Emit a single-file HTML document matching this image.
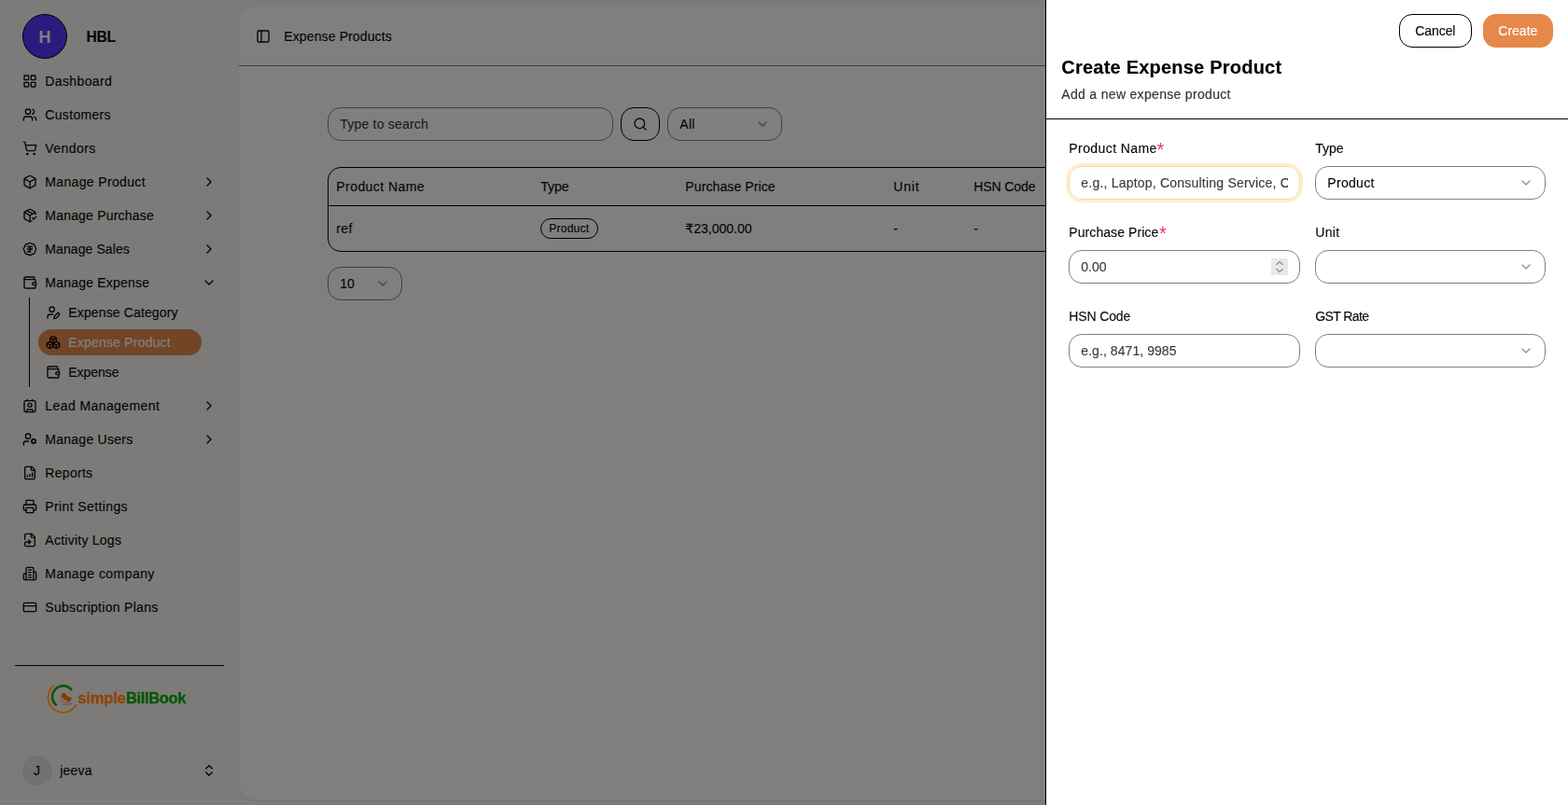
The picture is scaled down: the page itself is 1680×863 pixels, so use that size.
<!DOCTYPE html>
<html lang="en">
<head>
<meta charset="utf-8">
<title>Expense Products</title>
<style>

*{box-sizing:border-box;margin:0;padding:0}
html,body{width:1680px;height:863px;overflow:hidden;background:#fff}
body{font-family:"Liberation Sans", "DejaVu Sans", sans-serif;font-size:14px;color:#0a0a0a;position:relative}
.abs,.t,.ic,.bx{position:absolute}
.t{white-space:nowrap;line-height:20px;display:block;-webkit-text-stroke:0.15px currentColor}
.ic{display:block;overflow:visible}
#sidebar{position:absolute;left:0;top:0;width:1680px;height:863px;background:#f8f6f3}
#inset{position:absolute;left:256px;top:7px;width:1500px;height:851px;background:#fff;border-radius:19px;box-shadow:0 1px 2px rgba(0,0,0,.06)}
#overlay{position:absolute;left:0;top:0;width:1680px;height:863px;background:rgba(0,0,0,.5)}
#sheet{position:absolute;left:1120px;top:0;width:560px;height:863px;background:#fff;border-left:1px solid #000}
.bx{border:1px solid #808080;border-radius:14px;background:transparent}

</style>
</head>
<body>
<div id="sidebar">
<div class="bx" style="left:24px;top:15px;width:48px;height:48px;border-radius:50%;background:#5438ff;border:1px solid #000"></div>
<span class="t" id="av" style="left:41.40px;top:30.06px;line-height:20px;font-size:18px;font-weight:700;color:#fff;letter-spacing:0.000px;-webkit-text-stroke:0;">H</span>
<span class="t" id="org" style="left:92.60px;top:29.89px;line-height:20px;font-size:15.6px;font-weight:700;color:#0a0a0a;letter-spacing:-0.300px;-webkit-text-stroke:0.1px currentColor;">HBL</span>
<svg class="ic" style="left:24px;top:79px;width:16px;height:16px;color:currentColor;" viewBox="0 0 24 24" fill="none" stroke="currentColor" stroke-width="2" stroke-linecap="round" stroke-linejoin="round"><rect width="7" height="7" x="3" y="3" rx="1"/><rect width="7" height="7" x="14" y="3" rx="1"/><rect width="7" height="7" x="14" y="14" rx="1"/><rect width="7" height="7" x="3" y="14" rx="1"/></svg>
<span class="t" id="m0" style="left:48.30px;top:77.15px;line-height:20px;font-size:14px;font-weight:400;color:#0a0a0a;letter-spacing:0.376px;">Dashboard</span>
<svg class="ic" style="left:24px;top:115px;width:16px;height:16px;color:currentColor;" viewBox="0 0 24 24" fill="none" stroke="currentColor" stroke-width="2" stroke-linecap="round" stroke-linejoin="round"><path d="M16 21v-2a4 4 0 0 0-4-4H6a4 4 0 0 0-4 4v2"/><path d="M16 3.128a4 4 0 0 1 0 7.744"/><path d="M22 21v-2a4 4 0 0 0-3-3.87"/><circle cx="9" cy="7" r="4"/></svg>
<span class="t" id="m1" style="left:48.30px;top:113.15px;line-height:20px;font-size:14px;font-weight:400;color:#0a0a0a;letter-spacing:0.325px;">Customers</span>
<svg class="ic" style="left:24px;top:151px;width:16px;height:16px;color:currentColor;" viewBox="0 0 24 24" fill="none" stroke="currentColor" stroke-width="2" stroke-linecap="round" stroke-linejoin="round"><circle cx="8" cy="21" r="1"/><circle cx="19" cy="21" r="1"/><path d="M2.05 2.05h2l2.66 12.42a2 2 0 0 0 2 1.58h9.78a2 2 0 0 0 1.95-1.57l1.65-7.43H5.12"/></svg>
<span class="t" id="m2" style="left:48.30px;top:149.15px;line-height:20px;font-size:14px;font-weight:400;color:#0a0a0a;letter-spacing:0.434px;">Vendors</span>
<svg class="ic" style="left:24px;top:187px;width:16px;height:16px;color:currentColor;" viewBox="0 0 24 24" fill="none" stroke="currentColor" stroke-width="2" stroke-linecap="round" stroke-linejoin="round"><path d="M21 8a2 2 0 0 0-1-1.73l-7-4a2 2 0 0 0-2 0l-7 4A2 2 0 0 0 3 8v8a2 2 0 0 0 1 1.73l7 4a2 2 0 0 0 2 0l7-4A2 2 0 0 0 21 16Z"/><path d="m3.3 7 8.7 5 8.7-5"/><path d="M12 22V12"/></svg>
<span class="t" id="m3" style="left:48.30px;top:185.15px;line-height:20px;font-size:14px;font-weight:400;color:#0a0a0a;letter-spacing:0.353px;">Manage Product</span>
<svg class="ic" style="left:216px;top:187px;width:16px;height:16px;color:currentColor;" viewBox="0 0 24 24" fill="none" stroke="currentColor" stroke-width="2" stroke-linecap="round" stroke-linejoin="round"><path d="m9 18 6-6-6-6"/></svg>
<svg class="ic" style="left:24px;top:223px;width:16px;height:16px;color:currentColor;" viewBox="0 0 24 24" fill="none" stroke="currentColor" stroke-width="2" stroke-linecap="round" stroke-linejoin="round"><path d="m16 16 2 2 4-4"/><path d="M21 10V8a2 2 0 0 0-1-1.73l-7-4a2 2 0 0 0-2 0l-7 4A2 2 0 0 0 3 8v8a2 2 0 0 0 1 1.73l7 4a2 2 0 0 0 2 0l2-1.14"/><path d="m7.5 4.27 9 5.15"/><polyline points="3.29 7 12 12 20.71 7"/><line x1="12" x2="12" y1="22" y2="12"/></svg>
<span class="t" id="m4" style="left:48.30px;top:221.15px;line-height:20px;font-size:14px;font-weight:400;color:#0a0a0a;letter-spacing:0.201px;">Manage Purchase</span>
<svg class="ic" style="left:216px;top:223px;width:16px;height:16px;color:currentColor;" viewBox="0 0 24 24" fill="none" stroke="currentColor" stroke-width="2" stroke-linecap="round" stroke-linejoin="round"><path d="m9 18 6-6-6-6"/></svg>
<svg class="ic" style="left:24px;top:259px;width:16px;height:16px;color:currentColor;" viewBox="0 0 24 24" fill="none" stroke="currentColor" stroke-width="2" stroke-linecap="round" stroke-linejoin="round"><path d="M3.85 8.62a4 4 0 0 1 4.78-4.77 4 4 0 0 1 6.74 0 4 4 0 0 1 4.78 4.78 4 4 0 0 1 0 6.74 4 4 0 0 1-4.77 4.78 4 4 0 0 1-6.75 0 4 4 0 0 1-4.78-4.77 4 4 0 0 1 0-6.76Z"/><path d="M8 8h8"/><path d="M8 12h8"/><path d="m13 17-5-1h1a4 4 0 0 0 0-8"/></svg>
<span class="t" id="m5" style="left:48.30px;top:257.15px;line-height:20px;font-size:14px;font-weight:400;color:#0a0a0a;letter-spacing:0.091px;">Manage Sales</span>
<svg class="ic" style="left:216px;top:259px;width:16px;height:16px;color:currentColor;" viewBox="0 0 24 24" fill="none" stroke="currentColor" stroke-width="2" stroke-linecap="round" stroke-linejoin="round"><path d="m9 18 6-6-6-6"/></svg>
<svg class="ic" style="left:24px;top:295px;width:16px;height:16px;color:currentColor;" viewBox="0 0 24 24" fill="none" stroke="currentColor" stroke-width="2" stroke-linecap="round" stroke-linejoin="round"><path d="M19 7V4a1 1 0 0 0-1-1H5a2 2 0 0 0 0 4h15a1 1 0 0 1 1 1v4h-3a2 2 0 0 0 0 4h3a1 1 0 0 0 1-1v-2a1 1 0 0 0-1-1"/><path d="M3 5v14a2 2 0 0 0 2 2h15a1 1 0 0 0 1-1v-4"/></svg>
<span class="t" id="m6" style="left:48.30px;top:293.15px;line-height:20px;font-size:14px;font-weight:400;color:#0a0a0a;letter-spacing:0.214px;">Manage Expense</span>
<svg class="ic" style="left:216px;top:295px;width:16px;height:16px;color:currentColor;" viewBox="0 0 24 24" fill="none" stroke="currentColor" stroke-width="2" stroke-linecap="round" stroke-linejoin="round"><path d="m6 9 6 6 6-6"/></svg>
<div class="abs" style="left:31px;top:319px;width:1px;height:96px;background:#000"></div>
<div class="abs" style="left:41px;top:353px;width:175px;height:28px;border-radius:14px;background:#e6884c"></div>
<svg class="ic" style="left:49px;top:327px;width:16px;height:16px;color:#0a0a0a;" viewBox="0 0 24 24" fill="none" stroke="currentColor" stroke-width="2" stroke-linecap="round" stroke-linejoin="round"><path d="M11.5 15H7a4 4 0 0 0-4 4v2"/><path d="M21.378 16.626a1 1 0 0 0-3.004-3.004l-4.01 4.012a2 2 0 0 0-.506.854l-.837 2.87a.5.5 0 0 0 .62.62l2.87-.837a2 2 0 0 0 .854-.506z"/><circle cx="10" cy="7" r="4"/></svg>
<span class="t" id="m7" style="left:73.30px;top:325.15px;line-height:20px;font-size:14px;font-weight:400;color:#0a0a0a;letter-spacing:0.133px;">Expense Category</span>
<svg class="ic" style="left:49px;top:359px;width:16px;height:16px;color:#0a0a0a;" viewBox="0 0 24 24" fill="none" stroke="currentColor" stroke-width="2" stroke-linecap="round" stroke-linejoin="round"><path d="M2.97 12.92A2 2 0 0 0 2 14.63v3.24a2 2 0 0 0 .97 1.71l3 1.8a2 2 0 0 0 2.06 0L12 19v-5.5l-5-3-4.03 2.42Z"/><path d="m7 16.5-4.74-2.85"/><path d="m7 16.5 5-3"/><path d="M7 16.5v5.17"/><path d="M12 13.5V19l3.97 2.38a2 2 0 0 0 2.06 0l3-1.8a2 2 0 0 0 .97-1.71v-3.24a2 2 0 0 0-.97-1.71L17 10.5l-5 3Z"/><path d="m17 16.5-5-3"/><path d="m17 16.5 4.74-2.85"/><path d="M17 16.5v5.17"/><path d="M7.97 4.42A2 2 0 0 0 7 6.13v4.37l5 3 5-3V6.13a2 2 0 0 0-.97-1.71l-3-1.8a2 2 0 0 0-2.06 0l-3 1.8Z"/><path d="M12 8 7.26 5.15"/><path d="m12 8 4.74-2.85"/><path d="M12 13.5V8"/></svg>
<span class="t" id="m8" style="left:73.30px;top:357.15px;line-height:20px;font-size:14px;font-weight:400;color:#fff;letter-spacing:0.199px;">Expense Product</span>
<svg class="ic" style="left:49px;top:391px;width:16px;height:16px;color:#0a0a0a;" viewBox="0 0 24 24" fill="none" stroke="currentColor" stroke-width="2" stroke-linecap="round" stroke-linejoin="round"><path d="M19 7V4a1 1 0 0 0-1-1H5a2 2 0 0 0 0 4h15a1 1 0 0 1 1 1v4h-3a2 2 0 0 0 0 4h3a1 1 0 0 0 1-1v-2a1 1 0 0 0-1-1"/><path d="M3 5v14a2 2 0 0 0 2 2h15a1 1 0 0 0 1-1v-4"/></svg>
<span class="t" id="m9" style="left:73.30px;top:389.15px;line-height:20px;font-size:14px;font-weight:400;color:#0a0a0a;letter-spacing:-0.034px;">Expense</span>
<svg class="ic" style="left:24px;top:427px;width:16px;height:16px;color:currentColor;" viewBox="0 0 24 24" fill="none" stroke="currentColor" stroke-width="2" stroke-linecap="round" stroke-linejoin="round"><path d="M16 2v2"/><path d="M7 22v-2a2 2 0 0 1 2-2h6a2 2 0 0 1 2 2v2"/><path d="M8 2v2"/><circle cx="12" cy="11" r="3"/><rect x="3" y="4" width="18" height="18" rx="2"/></svg>
<span class="t" id="m10" style="left:48.30px;top:425.15px;line-height:20px;font-size:14px;font-weight:400;color:#0a0a0a;letter-spacing:0.414px;">Lead Management</span>
<svg class="ic" style="left:216px;top:427px;width:16px;height:16px;color:currentColor;" viewBox="0 0 24 24" fill="none" stroke="currentColor" stroke-width="2" stroke-linecap="round" stroke-linejoin="round"><path d="m9 18 6-6-6-6"/></svg>
<svg class="ic" style="left:24px;top:463px;width:16px;height:16px;color:currentColor;" viewBox="0 0 24 24" fill="none" stroke="currentColor" stroke-width="2" stroke-linecap="round" stroke-linejoin="round"><circle cx="18" cy="15" r="3"/><circle cx="9" cy="7" r="4"/><path d="M10 15H6a4 4 0 0 0-4 4v2"/><path d="m21.7 16.4-.9-.3"/><path d="m15.2 13.9-.9-.3"/><path d="m16.6 18.7.3-.9"/><path d="m19.1 12.2.3-.9"/><path d="m19.6 18.7-.4-1"/><path d="m16.8 12.3-.4-1"/><path d="m14.3 16.6 1-.4"/><path d="m20.7 13.8 1-.4"/></svg>
<span class="t" id="m11" style="left:48.30px;top:461.15px;line-height:20px;font-size:14px;font-weight:400;color:#0a0a0a;letter-spacing:0.255px;">Manage Users</span>
<svg class="ic" style="left:216px;top:463px;width:16px;height:16px;color:currentColor;" viewBox="0 0 24 24" fill="none" stroke="currentColor" stroke-width="2" stroke-linecap="round" stroke-linejoin="round"><path d="m9 18 6-6-6-6"/></svg>
<svg class="ic" style="left:24px;top:499px;width:16px;height:16px;color:currentColor;" viewBox="0 0 24 24" fill="none" stroke="currentColor" stroke-width="2" stroke-linecap="round" stroke-linejoin="round"><path d="M15 2H6a2 2 0 0 0-2 2v16a2 2 0 0 0 2 2h12a2 2 0 0 0 2-2V7Z"/><path d="M14 2v4a2 2 0 0 0 2 2h4"/><path d="M8 18v-2"/><path d="M12 18v-4"/><path d="M16 18v-6"/></svg>
<span class="t" id="m12" style="left:48.30px;top:497.15px;line-height:20px;font-size:14px;font-weight:400;color:#0a0a0a;letter-spacing:0.300px;">Reports</span>
<svg class="ic" style="left:24px;top:535px;width:16px;height:16px;color:currentColor;" viewBox="0 0 24 24" fill="none" stroke="currentColor" stroke-width="2" stroke-linecap="round" stroke-linejoin="round"><path d="M6 18H4a2 2 0 0 1-2-2v-5a2 2 0 0 1 2-2h16a2 2 0 0 1 2 2v5a2 2 0 0 1-2 2h-2"/><path d="M6 9V3a1 1 0 0 1 1-1h10a1 1 0 0 1 1 1v6"/><rect x="6" y="14" width="12" height="8" rx="1"/></svg>
<span class="t" id="m13" style="left:48.30px;top:533.15px;line-height:20px;font-size:14px;font-weight:400;color:#0a0a0a;letter-spacing:0.385px;">Print Settings</span>
<svg class="ic" style="left:24px;top:571px;width:16px;height:16px;color:currentColor;" viewBox="0 0 24 24" fill="none" stroke="currentColor" stroke-width="2" stroke-linecap="round" stroke-linejoin="round"><path d="m10 18 3-3-3-3"/><path d="M14 2v4a2 2 0 0 0 2 2h4"/><path d="M4 11V4a2 2 0 0 1 2-2h9l5 5v13a2 2 0 0 1-2 2H6a2 2 0 0 1-2-2v-3a2 2 0 0 1 2-2h7"/></svg>
<span class="t" id="m14" style="left:48.30px;top:569.15px;line-height:20px;font-size:14px;font-weight:400;color:#0a0a0a;letter-spacing:0.250px;">Activity Logs</span>
<svg class="ic" style="left:24px;top:607px;width:16px;height:16px;color:currentColor;" viewBox="0 0 24 24" fill="none" stroke="currentColor" stroke-width="2" stroke-linecap="round" stroke-linejoin="round"><path d="M6 22V4a2 2 0 0 1 2-2h8a2 2 0 0 1 2 2v18Z"/><path d="M6 12H4a2 2 0 0 0-2 2v6a2 2 0 0 0 2 2h2"/><path d="M18 9h2a2 2 0 0 1 2 2v9a2 2 0 0 1-2 2h-2"/><path d="M10 6h4"/><path d="M10 10h4"/><path d="M10 14h4"/><path d="M10 18h4"/></svg>
<span class="t" id="m15" style="left:48.30px;top:605.15px;line-height:20px;font-size:14px;font-weight:400;color:#0a0a0a;letter-spacing:0.445px;">Manage company</span>
<svg class="ic" style="left:24px;top:643px;width:16px;height:16px;color:currentColor;" viewBox="0 0 24 24" fill="none" stroke="currentColor" stroke-width="2" stroke-linecap="round" stroke-linejoin="round"><rect width="20" height="14" x="2" y="5" rx="2"/><line x1="2" x2="22" y1="10" y2="10"/></svg>
<span class="t" id="m16" style="left:48.30px;top:641.15px;line-height:20px;font-size:14px;font-weight:400;color:#0a0a0a;letter-spacing:0.294px;">Subscription Plans</span>
<div class="abs" style="left:16px;top:713px;width:224px;height:1px;background:#000"></div>
<div class="abs" style="left:24px;top:810px;width:32px;height:32px;border-radius:50%;background:#e4e4e4"></div>
<span class="t" id="uj" style="left:35.90px;top:816.15px;line-height:20px;font-size:14px;font-weight:400;color:#0a0a0a;letter-spacing:0.000px;">J</span>
<span class="t" id="un" style="left:64.30px;top:816.15px;line-height:20px;font-size:14px;font-weight:400;color:#0a0a0a;letter-spacing:0.200px;">jeeva</span>
<svg class="ic" style="left:216px;top:818px;width:16px;height:16px;color:currentColor;" viewBox="0 0 24 24" fill="none" stroke="currentColor" stroke-width="2" stroke-linecap="round" stroke-linejoin="round"><path d="m7 15 5 5 5-5"/><path d="m7 9 5-5 5 5"/></svg>
</div>
<div id="inset"></div>
<div id="main" class="abs" style="left:0;top:0;width:1680px;height:863px">
<div class="abs" style="left:256px;top:70px;width:1424px;height:1px;background:#808080"></div>
<svg class="ic" style="left:274px;top:31px;width:16px;height:16px;color:currentColor;" viewBox="0 0 24 24" fill="none" stroke="currentColor" stroke-width="2" stroke-linecap="round" stroke-linejoin="round"><rect width="18" height="18" x="3" y="3" rx="2"/><path d="M9 3v18"/></svg>
<span class="t" id="hd" style="left:304.30px;top:29.15px;line-height:20px;font-size:14px;font-weight:400;color:#0a0a0a;letter-spacing:0.120px;">Expense Products</span>
<div class="bx" style="left:351px;top:115px;width:306px;height:36px"></div>
<span class="t" id="ph" style="left:364.30px;top:123.15px;line-height:20px;font-size:14px;font-weight:400;color:#3d3d3d;letter-spacing:0.201px;">Type to search</span>
<div class="bx" style="left:665px;top:115px;width:42px;height:36px;border-color:#000"></div>
<svg class="ic" style="left:678px;top:125px;width:16px;height:16px;color:currentColor;" viewBox="0 0 24 24" fill="none" stroke="currentColor" stroke-width="2" stroke-linecap="round" stroke-linejoin="round"><path d="m21 21-4.34-4.34"/><circle cx="11" cy="11" r="8"/></svg>
<div class="bx" style="left:715px;top:115px;width:123px;height:36px"></div>
<span class="t" id="all" style="left:728.30px;top:123.15px;line-height:20px;font-size:14px;font-weight:400;color:#0a0a0a;letter-spacing:0.300px;">All</span>
<svg class="ic" style="left:809px;top:125px;width:16px;height:16px;color:currentColor;opacity:.45" viewBox="0 0 24 24" fill="none" stroke="currentColor" stroke-width="2" stroke-linecap="round" stroke-linejoin="round"><path d="m6 9 6 6 6-6"/></svg>
<div class="bx" style="left:351px;top:179px;width:1100px;height:91px;border-color:#000"></div>
<div class="abs" style="left:352px;top:220px;width:1100px;height:1px;background:#000"></div>
<span class="t" id="th0" style="left:360.30px;top:190.15px;line-height:20px;font-size:14px;font-weight:400;color:#0a0a0a;letter-spacing:0.437px;">Product Name</span>
<span class="t" id="th1" style="left:579.30px;top:190.15px;line-height:20px;font-size:14px;font-weight:400;color:#0a0a0a;letter-spacing:0.000px;">Type</span>
<span class="t" id="th2" style="left:734.30px;top:190.15px;line-height:20px;font-size:14px;font-weight:400;color:#0a0a0a;letter-spacing:0.109px;">Purchase Price</span>
<span class="t" id="th3" style="left:957.30px;top:190.15px;line-height:20px;font-size:14px;font-weight:400;color:#0a0a0a;letter-spacing:0.799px;">Unit</span>
<span class="t" id="th4" style="left:1043.30px;top:190.15px;line-height:20px;font-size:14px;font-weight:400;color:#0a0a0a;letter-spacing:-0.114px;">HSN Code</span>
<span class="t" id="td0" style="left:360.30px;top:235.15px;line-height:20px;font-size:14px;font-weight:400;color:#0a0a0a;letter-spacing:0.400px;">ref</span>
<div class="bx" style="left:579px;top:234px;width:62px;height:22px;border-color:#000;border-radius:11px"></div>
<span class="t" id="bd" style="left:588.30px;top:234.84px;line-height:20px;font-size:12px;font-weight:400;color:#0a0a0a;letter-spacing:0.233px;">Product</span>
<span class="t" id="td2" style="left:734.30px;top:235.15px;line-height:20px;font-size:14px;font-weight:400;color:#0a0a0a;letter-spacing:0.000px;">₹23,000.00</span>
<span class="t" id="td3" style="left:957.30px;top:235.15px;line-height:20px;font-size:14px;font-weight:400;color:#0a0a0a;letter-spacing:0.000px;">-</span>
<span class="t" id="td4" style="left:1043.30px;top:235.15px;line-height:20px;font-size:14px;font-weight:400;color:#0a0a0a;letter-spacing:0.000px;">-</span>
<div class="bx" style="left:351px;top:286px;width:80px;height:36px"></div>
<span class="t" id="ps" style="left:364.30px;top:294.15px;line-height:20px;font-size:14px;font-weight:400;color:#0a0a0a;letter-spacing:0.000px;">10</span>
<svg class="ic" style="left:402px;top:296px;width:16px;height:16px;color:currentColor;opacity:.45" viewBox="0 0 24 24" fill="none" stroke="currentColor" stroke-width="2" stroke-linecap="round" stroke-linejoin="round"><path d="m6 9 6 6 6-6"/></svg>
</div>
<div id="overlay"></div>
<svg class="ic" style="left:46px;top:728px;width:44px;height:42px" viewBox="46 728 44 42" fill="none"><path d="M57.51 735.01A16.2 16.2 0 1 0 81.48 756.11" stroke="rgb(156,82,12)" stroke-width="1.9" stroke-linecap="round"/><path d="M76.30 739.16A11.64 11.64 0 1 0 59.98 755.71" stroke="rgb(6,86,6)" stroke-width="2.45" stroke-linecap="round"/><path d="M68.4 741.9Q71.2 746.6 77.1 748.2L74.4 753Q69.2 750.9 65 746.4Z" fill="rgb(132,58,6)"/><path d="M65.3 749.4Q64.6 751.6 68 752.6Q71 753.4 74 753.6" stroke="rgb(132,58,6)" stroke-width="1" stroke-linecap="round" opacity=".6"/><path d="M65.6 754.4Q71 756.6 77.4 754.3" stroke="rgb(132,58,6)" stroke-width="1.1" stroke-linecap="round" opacity=".5"/></svg>
<div class="abs" style="left:0;top:0;width:256px;height:863px;will-change:transform">
<span class="t" id="lg1" style="left:83.30px;top:737.78px;line-height:20px;font-size:16.5px;font-weight:700;color:rgb(146,66,8);letter-spacing:-0.160px;-webkit-text-stroke:0.35px rgb(146,66,8);">simple</span>
<span class="t" id="lg2" style="left:134.90px;top:737.78px;line-height:20px;font-size:16.5px;font-weight:700;color:rgb(6,86,6);letter-spacing:-0.344px;-webkit-text-stroke:0.35px rgb(6,86,6);">BillBook</span>
</div>
<div id="sheet"></div>
<div id="sheetc" class="abs" style="left:0;top:0;width:1680px;height:863px;will-change:transform">
<div class="bx" style="left:1499px;top:15px;width:78px;height:36px;border-color:#000"></div>
<span class="t" id="cancel" style="left:1516.30px;top:23.15px;line-height:20px;font-size:14px;font-weight:400;color:#0a0a0a;letter-spacing:-0.080px;">Cancel</span>
<div class="abs" style="left:1589px;top:15px;width:75px;height:36px;border-radius:14px;background:#e6884a"></div>
<span class="t" id="create" style="left:1605.30px;top:23.15px;line-height:20px;font-size:14px;font-weight:400;color:#fff;letter-spacing:0.000px;">Create</span>
<span class="t" id="title" style="left:1137.30px;top:58.07px;line-height:28px;font-size:20px;font-weight:700;color:#000;letter-spacing:0.218px;">Create Expense Product</span>
<span class="t" id="sub" style="left:1137.30px;top:90.75px;line-height:20px;font-size:14px;font-weight:400;color:#333;letter-spacing:0.317px;">Add a new expense product</span>
<div class="abs" style="left:1121px;top:127px;width:559px;height:1px;background:#000"></div>
<span class="t" id="l1" style="left:1145.30px;top:149.15px;line-height:20px;font-size:14px;font-weight:400;color:#0a0a0a;letter-spacing:0.418px;">Product Name</span>
<span class="t" id="l1s" style="left:1239.60px;top:150.37px;line-height:20px;font-size:20px;font-weight:400;color:#f5314f;letter-spacing:0.000px;-webkit-text-stroke:0;">*</span>
<div class="bx" style="left:1145px;top:178px;width:248px;height:36px;border-color:#fcd79e;box-shadow:0 0 0 3px rgba(252,215,158,.45)"></div>
<span class="t" id="p1" style="left:1158.30px;top:186.15px;line-height:20px;font-size:14px;font-weight:400;color:#3d3d3d;letter-spacing:0.213px;width:221.70px;overflow:hidden;">e.g., Laptop, Consulting Service, Office Rent</span>
<span class="t" id="l2" style="left:1409.30px;top:149.15px;line-height:20px;font-size:14px;font-weight:400;color:#0a0a0a;letter-spacing:-0.066px;">Type</span>
<div class="bx" style="left:1409px;top:178px;width:247px;height:36px"></div>
<span class="t" id="v2" style="left:1422.30px;top:186.15px;line-height:20px;font-size:14px;font-weight:400;color:#0a0a0a;letter-spacing:0.300px;">Product</span>
<svg class="ic" style="left:1627px;top:188px;width:16px;height:16px;color:currentColor;opacity:.45" viewBox="0 0 24 24" fill="none" stroke="currentColor" stroke-width="2" stroke-linecap="round" stroke-linejoin="round"><path d="m6 9 6 6 6-6"/></svg>
<span class="t" id="l3" style="left:1145.30px;top:239.15px;line-height:20px;font-size:14px;font-weight:400;color:#0a0a0a;letter-spacing:0.077px;">Purchase Price</span>
<span class="t" id="l3s" style="left:1241.90px;top:240.37px;line-height:20px;font-size:20px;font-weight:400;color:#f5314f;letter-spacing:0.000px;-webkit-text-stroke:0;">*</span>
<div class="bx" style="left:1145px;top:268px;width:248px;height:36px"></div>
<span class="t" id="p3" style="left:1158.30px;top:276.15px;line-height:20px;font-size:14px;font-weight:400;color:#3d3d3d;letter-spacing:0.000px;">0.00</span>
<div class="abs" style="left:1362px;top:277px;width:18px;height:18px;background:#e9e9ed"></div>
<svg class="ic" style="left:1362px;top:277px;width:18px;height:18px" viewBox="0 0 18 18" fill="none" stroke="#8f8f9d" stroke-width="1.35" stroke-linecap="round" stroke-linejoin="round"><path d="M5.8 6.5 9 3.4l3.2 3.1"/><path d="M5.8 11.5 9 14.6l3.2-3.1"/></svg>
<span class="t" id="l4" style="left:1409.30px;top:239.15px;line-height:20px;font-size:14px;font-weight:400;color:#0a0a0a;letter-spacing:0.333px;">Unit</span>
<div class="bx" style="left:1409px;top:268px;width:247px;height:36px"></div>
<svg class="ic" style="left:1627px;top:278px;width:16px;height:16px;color:currentColor;opacity:.45" viewBox="0 0 24 24" fill="none" stroke="currentColor" stroke-width="2" stroke-linecap="round" stroke-linejoin="round"><path d="m6 9 6 6 6-6"/></svg>
<span class="t" id="l5" style="left:1145.30px;top:329.15px;line-height:20px;font-size:14px;font-weight:400;color:#0a0a0a;letter-spacing:-0.143px;">HSN Code</span>
<div class="bx" style="left:1145px;top:358px;width:248px;height:36px"></div>
<span class="t" id="p5" style="left:1158.30px;top:366.15px;line-height:20px;font-size:14px;font-weight:400;color:#3d3d3d;letter-spacing:0.067px;">e.g., 8471, 9985</span>
<span class="t" id="l6" style="left:1409.30px;top:329.15px;line-height:20px;font-size:14px;font-weight:400;color:#0a0a0a;letter-spacing:-0.600px;">GST Rate</span>
<div class="bx" style="left:1409px;top:358px;width:247px;height:36px"></div>
<svg class="ic" style="left:1627px;top:368px;width:16px;height:16px;color:currentColor;opacity:.45" viewBox="0 0 24 24" fill="none" stroke="currentColor" stroke-width="2" stroke-linecap="round" stroke-linejoin="round"><path d="m6 9 6 6 6-6"/></svg>
</div>
</body>
</html>
